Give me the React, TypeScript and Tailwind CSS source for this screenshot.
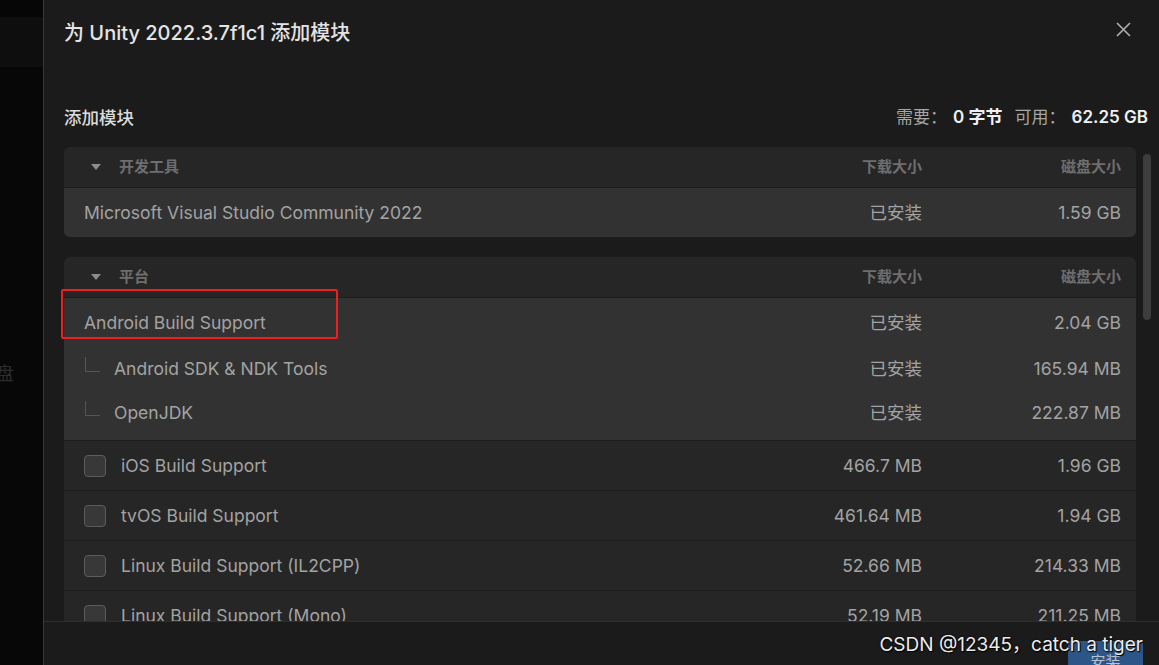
import React from 'react';

const font = { fontFamily: 'Inter, "Noto Sans CJK SC", sans-serif' };

function Caret() {
    return (
        <svg width="10" height="6" viewBox="0 0 10 6" className="shrink-0">
            <path d="M0 0h10L5 6z" fill="#8c8c8c" />
        </svg>
    );
}

function Checkbox() {
    return <div className="w-[22px] h-[22px] rounded-[4px] border border-[#5c5c5c] bg-[#383838] shrink-0" />;
}

function Cols({ dl, disk, head }: { dl: string; disk: string; head?: boolean }) {
    const cls = head ? 'text-[15px] font-semibold text-[#6e6e6e]' : 'text-[17.5px] text-[#a3a3a3]';
    return (
        <>
            <div className={`w-[200px] text-right ${cls}`}>{dl}</div>
            <div className={`w-[199px] text-right ${cls}`}>{disk}</div>
        </>
    );
}

function SectionHeader({ title }: { title: string }) {
    return (
        <div className="h-[40px] flex items-center pl-[27px] pr-[15px]">
            <Caret />
            <div className="ml-[18px] flex-1 text-[15px] font-semibold text-[#6e6e6e]">{title}</div>
            <Cols dl="下载大小" disk="磁盘大小" head />
        </div>
    );
}

function InstalledRow({ name, dl, disk, h = 'h-[49px]' }: { name: string; dl: string; disk: string; h?: string }) {
    return (
        <div className={`${h} flex items-center pl-[20px] pr-[15px] pt-[2px]`}>
            <div className="flex-1 text-[17.5px] text-[#a3a3a3]">{name}</div>
            <Cols dl={dl} disk={disk} />
        </div>
    );
}

function SubRow({ name, dl, disk }: { name: string; dl: string; disk: string }) {
    return (
        <div className="h-[44px] flex items-center pl-[21px] pr-[15px] pt-[3px]">
            <div className="w-[15px] h-[15px] -mt-[10px] border-l border-b border-[#555555] shrink-0" />
            <div className="ml-[14px] flex-1 text-[17.5px] text-[#a3a3a3]">{name}</div>
            <Cols dl={dl} disk={disk} />
        </div>
    );
}

function CheckRow({ name, dl, disk }: { name: string; dl: string; disk: string }) {
    return (
        <div className="h-[50px] border-t border-[#1c1c1c] flex items-center pl-[20px] pr-[15px] shrink-0">
            <Checkbox />
            <div className="ml-[15px] flex-1 text-[17.5px] text-[#a3a3a3] pt-[2px]">{name}</div>
            <div className="flex pt-[2px]">
                <Cols dl={dl} disk={disk} />
            </div>
        </div>
    );
}

export default function App() {
    return (
        <div className="relative w-[1159px] h-[665px] overflow-hidden flex bg-[#070707]" style={font}>
            {/* page behind the dialog */}
            <div className="w-[43px] flex flex-col shrink-0">
                <div className="h-[17px] bg-[#060606]" />
                <div className="h-[50px] bg-[#0e0e0e]" />
                <div className="pt-[293px] -ml-[4px] text-[18px] text-[#2e2e2e]">盘</div>
            </div>
            <div className="w-px bg-[#393939] shrink-0" />

            {/* dialog */}
            <div className="flex-1 flex flex-col bg-[#1b1b1b] min-w-0">
                <div className="h-[66px] flex items-center justify-between pl-[20px] pr-[28px] shrink-0">
                    <div className="text-[20px] font-medium text-[#e4e4e4]">为 Unity 2022.3.7f1c1 添加模块</div>
                    <svg width="15" height="15" viewBox="0 0 15 15" className="-mt-[7px]">
                        <path d="M1 1l13 13M14 1L1 14" stroke="#b0b0b0" strokeWidth="1.6" />
                    </svg>
                </div>

                <div className="h-[40px] mt-[32px] flex items-center justify-between pl-[20px] pr-[11px] shrink-0">
                    <div className="text-[17.5px] font-medium text-[#dcdcdc]">添加模块</div>
                    <div className="text-[17px] flex items-center">
                        <span className="text-[#a6a6a6]">需要：</span>
                        <span className="ml-[6px] font-semibold text-[#f0f0f0]">0 字节</span>
                        <span className="ml-[12px] text-[#a6a6a6]">可用：</span>
                        <span className="ml-[6px] font-semibold text-[#f0f0f0]">62.25 GB</span>
                    </div>
                </div>

                <div className="flex-1 flex mt-[9px] min-h-0 pl-[20px]">
                    <div className="w-[1072px] flex flex-col overflow-hidden">
                        <div className="rounded-[6px] overflow-hidden bg-[#262626] shrink-0">
                            <SectionHeader title="开发工具" />
                            <div className="border-t border-[#1c1c1c] bg-[#323232]">
                                <InstalledRow name="Microsoft Visual Studio Community 2022" dl="已安装" disk="1.59 GB" />
                            </div>
                        </div>

                        <div className="mt-[20px] rounded-t-[6px] bg-[#262626] flex flex-col shrink-0">
                            <SectionHeader title="平台" />
                            <div className="border-t border-[#1c1c1c] bg-[#323232] pb-[6px]">
                                <InstalledRow name="Android Build Support" dl="已安装" disk="2.04 GB" h="h-[48px]" />
                                <SubRow name="Android SDK & NDK Tools" dl="已安装" disk="165.94 MB" />
                                <SubRow name="OpenJDK" dl="已安装" disk="222.87 MB" />
                            </div>
                            <CheckRow name="iOS Build Support" dl="466.7 MB" disk="1.96 GB" />
                            <CheckRow name="tvOS Build Support" dl="461.64 MB" disk="1.94 GB" />
                            <CheckRow name="Linux Build Support (IL2CPP)" dl="52.66 MB" disk="214.33 MB" />
                            <CheckRow name="Linux Build Support (Mono)" dl="52.19 MB" disk="211.25 MB" />
                        </div>
                    </div>
                    <div className="ml-[7px] w-[8px] shrink-0">
                        <div className="mt-[7px] h-[166px] rounded-full bg-[#3d3d3d]" />
                    </div>
                </div>

                <div className="h-[44px] border-t border-[#2e2e2e] flex justify-end pr-[16px] shrink-0">
                    <div className="mt-[19px] w-[75px] h-[36px] bg-[#2e5587] flex justify-center pt-[10px] text-[15px] text-[#b8c4d4]">
                        安装
                    </div>
                </div>
            </div>

            {/* red highlight */}
            <div className="absolute left-[61px] top-[289px] w-[277px] h-[50px] border-2 border-[#f21d1d] rounded-[2px]" />

            {/* watermark */}
            <div
                className="absolute right-[16px] top-[631px] text-[19px] text-[#ececec] whitespace-nowrap"
                style={{ textShadow: '0 0 2px #000, 1px 1px 1px #000' }}
            >
                CSDN @12345，catch a tiger
            </div>
        </div>
    );
}
